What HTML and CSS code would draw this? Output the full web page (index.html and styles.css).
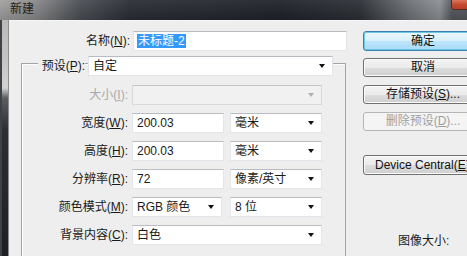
FILE: index.html
```html
<!DOCTYPE html>
<html lang="zh-CN">
<head>
<meta charset="utf-8">
<title>新建</title>
<link rel="stylesheet" href="styles.css">
</head>
<body>
<div class="window">
  <div class="titlebar">
    <span class="title">新建</span>
    <span class="close"></span>
  </div>
  <div class="frame">
    <div class="edge"></div>
    <div class="client">
      <div class="left">
        <div class="name-row">
          <label class="lbl">名称(<u>N</u>):</label>
          <div class="field text"><span class="sel">未标题-2</span></div>
        </div>
        <div class="group">
          <div class="preset-row">
            <label class="lbl">预设(<u>P</u>):</label>
            <div class="field combo">自定<i class="arrow"></i></div>
          </div>
          <div class="rows">
            <label class="lbl disabled">大小(<u>I</u>):</label>
            <div class="field combo off"><i class="arrow"></i></div>

            <label class="lbl">宽度(<u>W</u>):</label>
            <div class="pair">
              <div class="field text">200.03</div>
              <div class="field combo">毫米<i class="arrow"></i></div>
            </div>

            <label class="lbl">高度(<u>H</u>):</label>
            <div class="pair">
              <div class="field text">200.03</div>
              <div class="field combo">毫米<i class="arrow"></i></div>
            </div>

            <label class="lbl">分辨率(<u>R</u>):</label>
            <div class="pair">
              <div class="field text">72</div>
              <div class="field combo">像素/英寸<i class="arrow"></i></div>
            </div>

            <label class="lbl">颜色模式(<u>M</u>):</label>
            <div class="pair mode">
              <div class="field combo">RGB 颜色<i class="arrow"></i></div>
              <div class="field combo">8 位<i class="arrow"></i></div>
            </div>

            <label class="lbl">背景内容(<u>C</u>):</label>
            <div class="field combo">白色<i class="arrow"></i></div>
          </div>
        </div>
      </div>
      <div class="right">
        <button class="btn default">确定</button>
        <button class="btn b2">取消</button>
        <button class="btn b3">存储预设(<u>S</u>)...</button>
        <button class="btn b3 disabled">删除预设(<u>D</u>)...</button>
        <button class="btn b5">Device Central(<u>E</u>)...</button>
        <div class="imgsize">图像大小:</div>
      </div>
    </div>
  </div>
</div>
</body>
</html>
```

FILE: styles.css
```css
* { box-sizing: border-box; }
html, body { margin: 0; padding: 0; }
body {
  width: 467px;
  height: 256px;
  overflow: hidden;
  background: #222;
  font-family: "Liberation Sans", "Noto Sans CJK SC", sans-serif;
  font-size: 12px;
  color: #1a1a1a;
}
u { text-decoration: underline; text-underline-offset: 1px; }

.window {
  width: 467px;
  height: 256px;
  display: flex;
  flex-direction: column;
}
.titlebar {
  position: relative;
  height: 20px;
  flex: none;
  background:
    linear-gradient(to bottom, rgba(255,255,255,0.06), rgba(0,0,0,0.15)),
    linear-gradient(to right, #a2a2a2 0, #8a8a8a 35px, #4b4f55 80px, #2a2e35 130px, #1f232a 280px, #2c3036 360px, #6f7378 410px, #8d9095 440px, #55585d 452px);
}
.title {
  position: absolute;
  left: 10px;
  top: 2px;
  font-size: 12px;
  color: #202020;
  line-height: 14px;
}
.close {
  position: absolute;
  left: 451px;
  top: -3px;
  width: 30px;
  height: 13px;
  border-radius: 3px;
  border: 1px solid #5a2a22;
  background: linear-gradient(to bottom, #e58a72, #c44a30 60%, #b5402a);
}

.frame {
  flex: 1;
  display: flex;
  min-height: 0;
}
.edge {
  width: 9px;
  flex: none;
  border-left: 2px solid #3e4146;
  border-right: 1px solid #8c8c8c;
  background: linear-gradient(to bottom, #b9b9b9 0, #c4c4c4 40px, #d2d2d2 68px, #5a5d62 78px, #2b2e33 110px, #1c1f23 236px);
}
.client {
  flex: 1;
  display: flex;
  gap: 16px;
  background: #eeeeee;
  border-top: 1px solid #f7f7f7;
  overflow: hidden;
  min-width: 0;
}

.left {
  width: 338px;
  flex: none;
  display: flex;
  flex-direction: column;
  padding-top: 10px;
}
.lbl {
  text-align: right;
  white-space: nowrap;
  line-height: 20px;
  color: #1a1a1a;
}
.lbl.disabled { color: #a8a8a8; }

.name-row {
  display: grid;
  grid-template-columns: 121px 214px;
  column-gap: 3px;
}

.field {
  position: relative;
  height: 20px;
  line-height: 18px;
  padding-left: 4px;
  background: #fff;
  border: 1px solid #e2e5e9;
  border-top-color: #b8bbc0;
  white-space: nowrap;
}
.field.text { padding-left: 4px; }
.sel {
  background: #3399ff;
  color: #fff;
  padding: 0 1px;
  margin-left: -1px;
}
.combo { padding-right: 16px; }
.arrow {
  position: absolute;
  right: 7px;
  top: 7px;
  width: 0;
  height: 0;
  border-left: 3.5px solid transparent;
  border-right: 3.5px solid transparent;
  border-top: 4px solid #111;
}
.combo.off {
  background: #f1f1f1;
  border-color: #d8d8d8;
  border-top-color: #c4c4c4;
}
.combo.off .arrow { border-top-color: #b0b0b0; }

.group {
  flex: 1;
  margin-top: 12px;
  margin-left: 12px;
  width: 325px;
  border: 1px solid #a4a4a4;
  border-bottom: none;
  box-shadow: inset 1px 1px 0 #fdfdfd;
}
.preset-row {
  margin-top: -8px;
  display: grid;
  grid-template-columns: 63px 245px;
  column-gap: 3px;
  background: linear-gradient(to bottom, transparent 7px, transparent 7px);
}
.preset-row .lbl {
  background: #eeeeee;
  justify-self: end;
  padding-left: 4px;
  margin-top: 0;
}
.rows {
  margin-top: 9px;
  display: grid;
  grid-template-columns: 106px 190px;
  column-gap: 4px;
  row-gap: 8px;
}
.pair {
  display: grid;
  grid-template-columns: 92px 92px;
  column-gap: 6px;
}
.pair.mode { grid-template-columns: 90px 92px; column-gap: 8px; }

.right {
  width: 120px;
  flex: none;
  display: flex;
  flex-direction: column;
  padding-top: 10px;
}
.btn {
  font: inherit;
  color: #111;
  width: 120px;
  height: 19px;
  padding: 0;
  line-height: 17px;
  text-align: center;
  border: 1px solid #707070;
  border-radius: 3px;
  background: linear-gradient(to bottom, #f3f3f3 0, #ebebeb 50%, #dddddd 51%, #cfcfcf 100%);
  box-shadow: inset 0 0 0 1px #fbfbfb;
  white-space: nowrap;
  overflow: visible;
}
.btn.default {
  height: 20px;
  border-color: #3c7fb1;
  background: linear-gradient(to bottom, #eaf6fd 0, #d9f0fc 50%, #bee6fd 51%, #a7d9f5 100%);
  box-shadow: inset 0 0 0 1px #6fc6e6;
}
.b2 { margin-top: 7px; }
.b3 { margin-top: 8px; }
.btn.disabled {
  color: #a0a0a0;
  border-color: #b5b5b5;
  background: #f4f4f4;
  box-shadow: none;
}
.b5 { margin-top: 24px; height: 20px; text-align: left; padding-left: 11px; }
.imgsize {
  margin-top: 59px;
  padding-left: 35px;
  line-height: 14px;
  color: #1a1a1a;
}
```
